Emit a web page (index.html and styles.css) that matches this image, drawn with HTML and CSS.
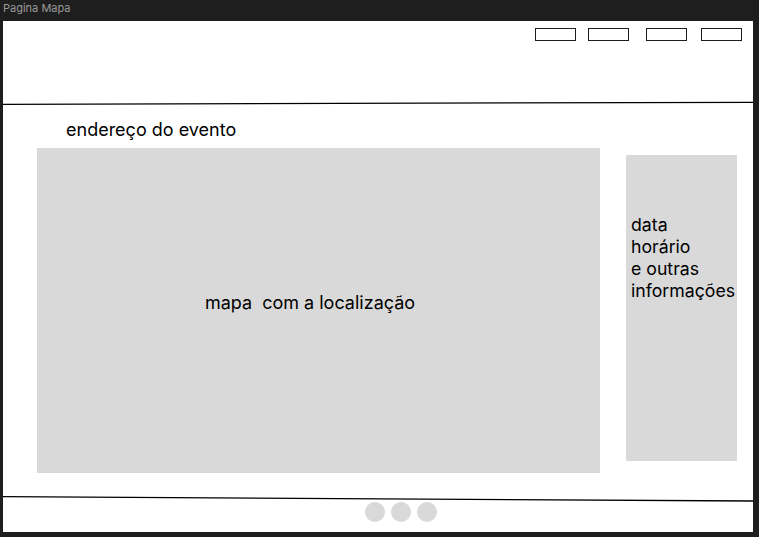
FILE: index.html
```html
<!DOCTYPE html>
<html lang="pt">
<head>
<meta charset="utf-8">
<title>Pagina Mapa</title>
<link rel="stylesheet" href="styles.css">
</head>
<body>
<div class="titlebar">Pagina Mapa</div>
<div class="frame">
  <header class="header">
    <span class="btn btn1"></span>
    <span class="btn btn2"></span>
    <span class="btn btn3"></span>
    <span class="btn btn4"></span>
  </header>
  <svg class="rule rule-top" width="750" height="5" viewBox="0 0 750 5"><line x1="0" y1="3.3" x2="750" y2="1.3" stroke="#000" stroke-width="1.3"/></svg>
  <div class="address">endereço do evento</div>
  <main class="content">
    <div class="map"><span class="map-label">mapa  com a localização</span></div>
    <aside class="info">data<br>horário<br>e outras<br>informações</aside>
  </main>
  <svg class="rule rule-bottom" width="750" height="8" viewBox="0 0 750 8"><line x1="0" y1="2.7" x2="750" y2="7" stroke="#000" stroke-width="1.3"/></svg>
  <footer class="dots">
    <span class="dot"></span><span class="dot"></span><span class="dot"></span>
  </footer>
</div>
</body>
</html>
```
FILE: styles.css
```css
html, body {
  margin: 0;
  padding: 0;
  background: #1e1e1e;
  height: 537px;
  overflow: hidden;
  font-family: Inter, "Noto Sans", sans-serif;
}
.titlebar {
  height: 21px;
  padding-left: 3px;
  color: #9a9a9a;
  font-size: 11px;
  line-height: 16px;
  box-sizing: border-box;
}
.frame {
  margin-left: 3px;
  width: 750px;
  height: 511px;
  background: #fff;
  display: flex;
  flex-direction: column;
}
.header {
  height: 80px;
  display: flex;
  justify-content: flex-end;
  align-items: flex-start;
  padding: 7px 11px 0 0;
  box-sizing: border-box;
}
.btn {
  width: 41px;
  height: 13px;
  border: 1.6px solid #1e1e1e;
  box-sizing: border-box;
  background: #fff;
}
.btn2 { margin-left: 12px; }
.btn3 { margin-left: 17px; }
.btn4 { margin-left: 14px; }
.rule {
  display: block;
  flex: none;
}
.address {
  margin-top: 13px;
  padding-left: 63px;
  font-size: 18px;
  line-height: 21px;
  color: #000;
}
.content {
  margin-top: 8px;
  display: flex;
  align-items: flex-start;
}
.map {
  margin-left: 34px;
  width: 563px;
  height: 325px;
  background: #d9d9d9;
  display: flex;
  align-items: center;
  justify-content: center;
  padding: 0 17px 16px 0;
  box-sizing: border-box;
}
.map-label {
  white-space: pre;
  font-size: 18px;
  color: #000;
}
.info {
  margin-left: 26px;
  margin-top: 7px;
  width: 111px;
  height: 306px;
  background: #d9d9d9;
  box-sizing: border-box;
  padding: 59px 0 0 5px;
  font-size: 17.7px;
  line-height: 22px;
  color: #000;
  white-space: nowrap;
}
.rule-bottom {
  margin-top: 21px;
}
.dots {
  display: flex;
  gap: 6px;
  padding-left: 362px;
}
.dot {
  width: 20px;
  height: 20px;
  border-radius: 50%;
  background: #d9d9d9;
}
```
